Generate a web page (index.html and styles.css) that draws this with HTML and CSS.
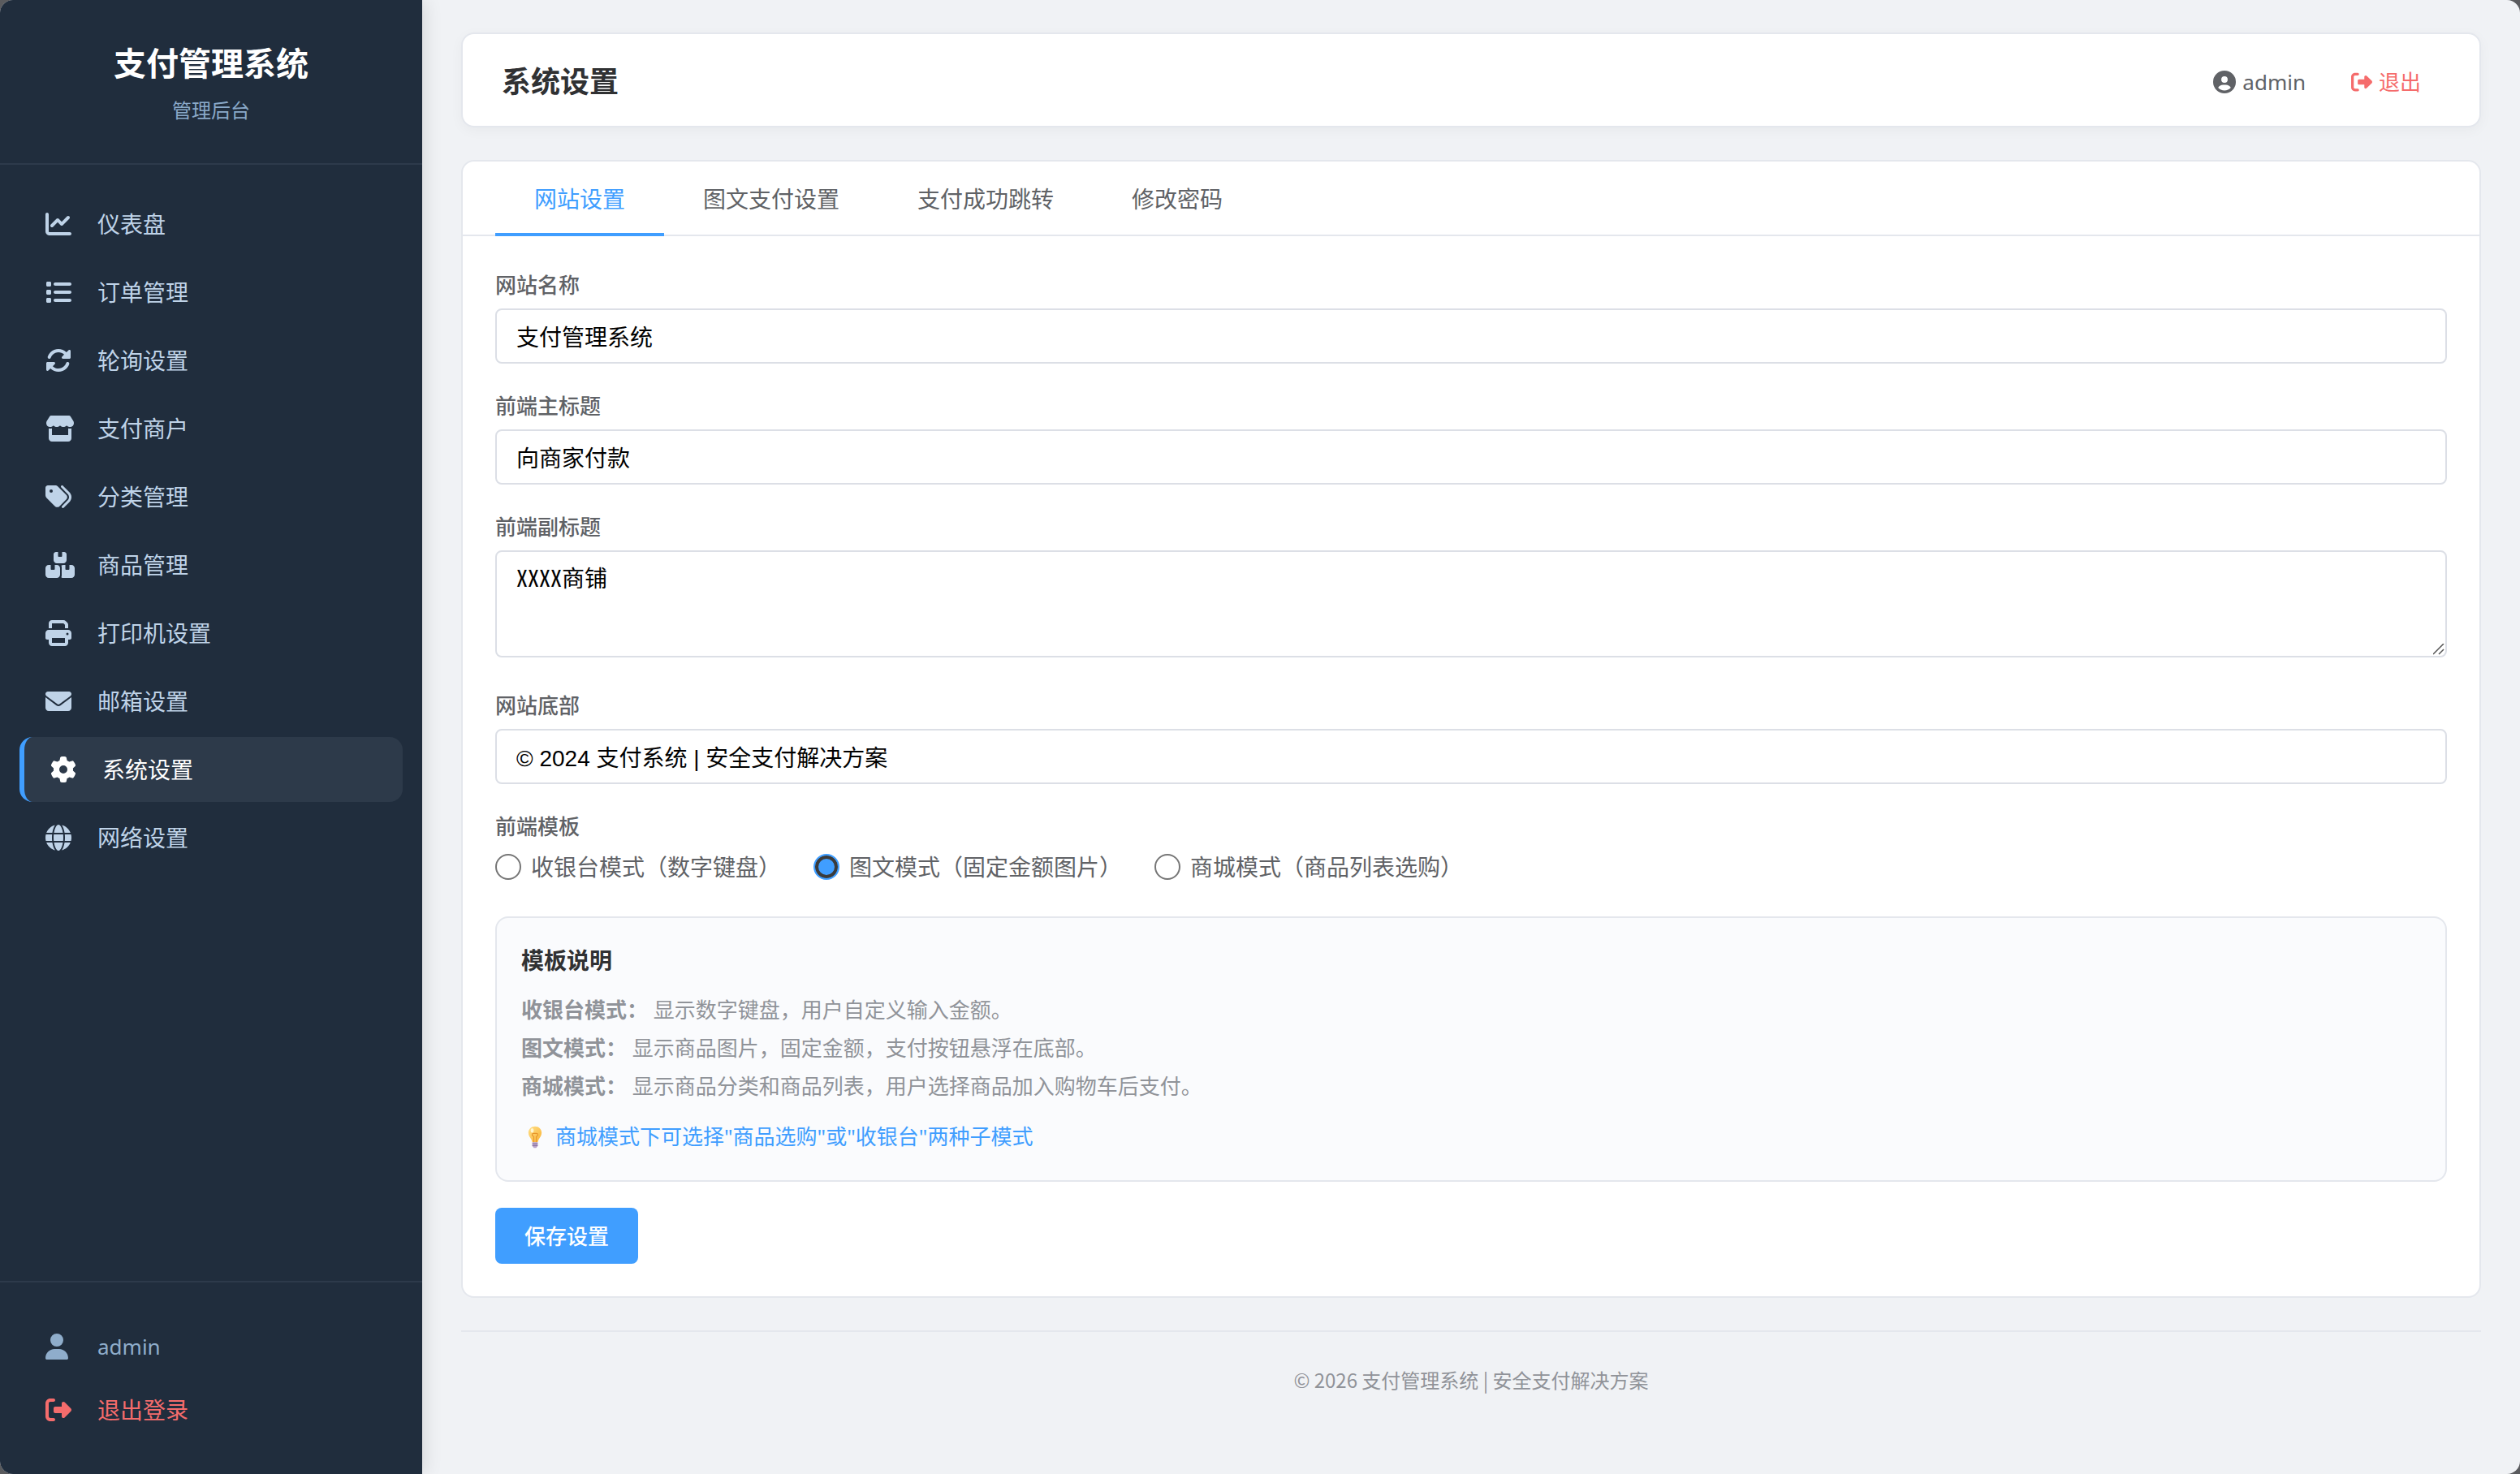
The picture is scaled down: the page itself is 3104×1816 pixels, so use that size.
FILE: index.html
```html
<!DOCTYPE html>
<html lang="zh-CN">

<head>
  <meta charset="UTF-8">
  <meta name="viewport" content="width=device-width, initial-scale=1.0">
  <title>系统设置 - 支付管理系统</title>
  <link rel="stylesheet" href="styles.css">
</head>

<body>
  <aside class="sidebar">
    <div class="sidebar-header">
      <h2>支付管理系统</h2>
      <p>管理后台</p>
    </div>

    <nav class="sidebar-nav">
      <a href="#dashboard" class="nav-item">
        <svg class="icon" viewBox="0 0 512 512"><path d="M64 64c0-17.7-14.3-32-32-32S0 46.3 0 64L0 400c0 44.2 35.8 80 80 80l400 0c17.7 0 32-14.3 32-32s-14.3-32-32-32L80 416c-8.8 0-16-7.2-16-16L64 64zm406.6 86.6c12.5-12.5 12.5-32.8 0-45.3s-32.8-12.5-45.3 0L320 210.7l-57.4-57.4c-12.5-12.5-32.8-12.5-45.3 0l-112 112c-12.5 12.5-12.5 32.8 0 45.3s32.8 12.5 45.3 0L240 221.3l57.4 57.4c12.5 12.5 32.8 12.5 45.3 0l128-128z"/></svg>
        <span>仪表盘</span>
      </a>
      <a href="#orders" class="nav-item">
        <svg class="icon" viewBox="0 0 512 512"><path d="M40 48C26.7 48 16 58.7 16 72l0 48c0 13.3 10.7 24 24 24l48 0c13.3 0 24-10.7 24-24l0-48c0-13.3-10.7-24-24-24L40 48zM192 64c-17.7 0-32 14.3-32 32s14.3 32 32 32l288 0c17.7 0 32-14.3 32-32s-14.3-32-32-32L192 64zm0 160c-17.7 0-32 14.3-32 32s14.3 32 32 32l288 0c17.7 0 32-14.3 32-32s-14.3-32-32-32l-288 0zm0 160c-17.7 0-32 14.3-32 32s14.3 32 32 32l288 0c17.7 0 32-14.3 32-32s-14.3-32-32-32l-288 0zM16 232l0 48c0 13.3 10.7 24 24 24l48 0c13.3 0 24-10.7 24-24l0-48c0-13.3-10.7-24-24-24l-48 0c-13.3 0-24 10.7-24 24zM40 368c-13.3 0-24 10.7-24 24l0 48c0 13.3 10.7 24 24 24l48 0c13.3 0 24-10.7 24-24l0-48c0-13.3-10.7-24-24-24l-48 0z"/></svg>
        <span>订单管理</span>
      </a>
      <a href="#polling" class="nav-item">
        <svg class="icon" viewBox="0 0 512 512"><path d="M142.9 142.9c-17.5 17.5-30.1 38-37.8 59.8c-5.9 16.7-24.2 25.4-40.8 19.5s-25.4-24.2-19.5-40.8C55.6 150.7 73.2 122 97.6 97.6c87.2-87.2 228.3-87.5 315.8-1L455 55c6.9-6.9 17.2-8.9 26.2-5.2s14.8 12.5 14.8 22.2l0 128c0 13.3-10.7 24-24 24l-8.4 0c0 0 0 0 0 0L344 224c-9.7 0-18.5-5.8-22.2-14.8s-1.7-19.3 5.2-26.2l41.1-41.1c-62.6-61.5-163.1-61.2-225.3 1zM16 312c0-13.3 10.7-24 24-24l7.6 0 .7 0L168 288c9.7 0 18.5 5.8 22.2 14.8s1.7 19.3-5.2 26.2l-41.1 41.1c62.6 61.5 163.1 61.2 225.3-1c17.5-17.5 30.1-38 37.8-59.8c5.9-16.7 24.2-25.4 40.8-19.5s25.4 24.2 19.5 40.8c-10.8 30.6-28.4 59.3-52.9 83.8c-87.2 87.2-228.3 87.5-315.8 1L57 457c-6.9 6.9-17.2 8.9-26.2 5.2S16 449.7 16 440l0-119.6 0-.7 0-7.6z"/></svg>
        <span>轮询设置</span>
      </a>
      <a href="#merchants" class="nav-item">
        <svg class="icon" viewBox="0 0 576 512"><path d="M547.6 103.8L490.3 13.1C485.2 5 476.1 0 466.4 0L109.6 0C99.9 0 90.8 5 85.7 13.1L28.3 103.8c-29.6 46.8-3.4 111.9 51.9 119.4c4 .5 8.1 .8 12.1 .8c26.1 0 49.3-11.4 65.2-29c15.9 17.6 39.1 29 65.2 29c26.1 0 49.3-11.4 65.2-29c15.9 17.6 39.1 29 65.2 29c26.2 0 49.3-11.4 65.2-29c16 17.6 39.1 29 65.2 29c4.1 0 8.1-.3 12.1-.8c55.5-7.4 81.8-72.5 52.1-119.4zM499.7 254.9c0 0 0 0-.1 0c-5.3 .7-10.7 1.1-16.2 1.1c-12.4 0-24.3-1.9-35.4-5.3L448 384l-320 0 0-133.4c-11.2 3.5-23.2 5.4-35.6 5.4c-5.5 0-11-.4-16.3-1.1l-.1 0c-4.1-.6-8.1-1.3-12-2.3L64 384l0 64c0 35.3 28.7 64 64 64l320 0c35.3 0 64-28.7 64-64l0-64 0-131.4c-4 1-8 1.8-12.3 2.3z"/></svg>
        <span>支付商户</span>
      </a>
      <a href="#categories" class="nav-item">
        <svg class="icon" viewBox="0 0 512 512"><path d="M345 39.1L472.8 168.4c52.4 53 52.4 138.2 0 191.2L360.8 472.9c-9.3 9.4-24.5 9.5-33.9 .2s-9.5-24.5-.2-33.9L438.6 325.9c33.9-34.3 33.9-89.4 0-123.7L310.9 72.9c-9.3-9.4-9.2-24.6 .2-33.9s24.6-9.2 33.9 .2zM0 229.5L0 80C0 53.5 21.5 32 48 32l149.5 0c17 0 33.3 6.7 45.3 18.7l168 168c25 25 25 65.5 0 90.5L277.3 442.7c-25 25-65.5 25-90.5 0l-168-168C6.7 262.7 0 246.5 0 229.5zM144 144a32 32 0 1 0 -64 0 32 32 0 1 0 64 0z"/></svg>
        <span>分类管理</span>
      </a>
      <a href="#products" class="nav-item">
        <svg class="icon" viewBox="0 0 576 512"><path d="M248 0L208 0c-26.5 0-48 21.5-48 48l0 112c0 35.3 28.7 64 64 64l128 0c35.3 0 64-28.7 64-64l0-112c0-26.5-21.5-48-48-48L328 0l0 80c0 8.8-7.2 16-16 16l-48 0c-8.8 0-16-7.2-16-16l0-80zM64 256c-35.3 0-64 28.7-64 64L0 448c0 35.3 28.7 64 64 64l160 0c35.3 0 64-28.7 64-64l0-128c0-35.3-28.7-64-64-64l-40 0 0 80c0 8.8-7.2 16-16 16l-48 0c-8.8 0-16-7.2-16-16l0-80-40 0zM352 512l160 0c35.3 0 64-28.7 64-64l0-128c0-35.3-28.7-64-64-64l-40 0 0 80c0 8.8-7.2 16-16 16l-48 0c-8.8 0-16-7.2-16-16l0-80-40 0c-15 0-28.8 5.1-39.7 13.8c4.9 10.4 7.7 22 7.7 34.2l0 160c0 12.2-2.8 23.8-7.7 34.2C323.2 506.9 337 512 352 512z"/></svg>
        <span>商品管理</span>
      </a>
      <a href="#printer" class="nav-item">
        <svg class="icon" viewBox="0 0 512 512"><path d="M128 0C92.7 0 64 28.7 64 64l0 96 64 0 0-96 226.7 0L384 93.3l0 66.7 64 0 0-66.7c0-17-6.7-33.3-18.7-45.3L400 18.7C388 6.7 371.7 0 354.7 0L128 0zM384 352l0 32 0 64-256 0 0-64 0-16 0-16 256 0zm64 32l32 0c17.7 0 32-14.3 32-32l0-96c0-35.3-28.7-64-64-64L64 192c-35.3 0-64 28.7-64 64l0 96c0 17.7 14.3 32 32 32l32 0 0 64c0 35.3 28.7 64 64 64l256 0c35.3 0 64-28.7 64-64l0-64zM432 248a24 24 0 1 1 0 48 24 24 0 1 1 0-48z"/></svg>
        <span>打印机设置</span>
      </a>
      <a href="#email" class="nav-item">
        <svg class="icon" viewBox="0 0 512 512"><path d="M48 64C21.5 64 0 85.5 0 112c0 15.1 7.1 29.3 19.2 38.4L236.8 313.6c11.4 8.5 27 8.5 38.4 0L492.8 150.4c12.1-9.1 19.2-23.3 19.2-38.4c0-26.5-21.5-48-48-48L48 64zM0 176L0 384c0 35.3 28.7 64 64 64l384 0c35.3 0 64-28.7 64-64l0-208L294.4 339.2c-22.8 17.1-54 17.1-76.8 0L0 176z"/></svg>
        <span>邮箱设置</span>
      </a>
      <a href="#settings" class="nav-item active">
        <svg class="icon" viewBox="0 0 512 512"><path d="M495.9 166.6c3.2 8.7 .5 18.4-6.4 24.6l-43.3 39.4c1.1 8.3 1.7 16.8 1.7 25.4s-.6 17.1-1.7 25.4l43.3 39.4c6.9 6.2 9.6 15.9 6.4 24.6c-4.4 11.9-9.7 23.3-15.8 34.3l-4.7 8.1c-6.6 11-14 21.4-22.1 31.2c-5.9 7.2-15.7 9.6-24.5 6.8l-55.7-17.7c-13.4 10.3-28.2 18.9-44 25.4l-12.5 57.1c-2 9.1-9 16.3-18.2 17.8c-13.8 2.3-28 3.5-42.5 3.5s-28.7-1.2-42.5-3.5c-9.2-1.5-16.2-8.7-18.2-17.8l-12.5-57.1c-15.8-6.5-30.6-15.1-44-25.4L83.1 425.9c-8.8 2.8-18.6 .3-24.5-6.8c-8.1-9.8-15.5-20.2-22.1-31.2l-4.7-8.1c-6.1-11-11.4-22.4-15.8-34.3c-3.2-8.7-.5-18.4 6.4-24.6l43.3-39.4C64.6 273.1 64 264.6 64 256s.6-17.1 1.7-25.4L22.4 191.2c-6.9-6.2-9.6-15.9-6.4-24.6c4.4-11.9 9.7-23.3 15.8-34.3l4.7-8.1c6.6-11 14-21.4 22.1-31.2c5.9-7.2 15.7-9.6 24.5-6.8l55.7 17.7c13.4-10.3 28.2-18.9 44-25.4l12.5-57.1c2-9.1 9-16.3 18.2-17.8C227.3 1.2 241.5 0 256 0s28.7 1.2 42.5 3.5c9.2 1.5 16.2 8.7 18.2 17.8l12.5 57.1c15.8 6.5 30.6 15.1 44 25.4l55.7-17.7c8.8-2.8 18.6-.3 24.5 6.8c8.1 9.8 15.5 20.2 22.1 31.2l4.7 8.1c6.1 11 11.4 22.4 15.8 34.3zM256 336a80 80 0 1 0 0-160 80 80 0 1 0 0 160z"/></svg>
        <span>系统设置</span>
      </a>
      <a href="#network" class="nav-item">
        <svg class="icon" viewBox="0 0 512 512"><path d="M352 256c0 22.2-1.2 43.6-3.3 64l-185.3 0c-2.2-20.4-3.3-41.8-3.3-64s1.2-43.6 3.3-64l185.3 0c2.2 20.4 3.3 41.8 3.3 64zm28.8-64l123.1 0c5.3 20.5 8.1 41.9 8.1 64s-2.8 43.5-8.1 64l-123.1 0c2.1-20.6 3.2-42 3.2-64s-1.1-43.4-3.2-64zm112.6-32l-116.7 0c-10-63.9-29.8-117.4-55.3-151.6c78.3 20.7 142 77.5 171.9 151.6zm-149.1 0l-176.6 0c6.1-36.4 15.5-68.6 27-94.7c10.5-23.6 22.2-40.7 33.5-51.5C239.4 3.2 248.7 0 256 0s16.6 3.2 27.8 13.8c11.3 10.8 23 27.9 33.5 51.5c11.6 26 20.9 58.2 27 94.7zm-209 0L18.6 160C48.6 85.9 112.2 29.1 190.6 8.4C165.1 42.6 145.3 96.1 135.3 160zM8.1 192l123.1 0c-2.1 20.6-3.2 42-3.2 64s1.1 43.4 3.2 64L8.1 320C2.8 299.5 0 278.1 0 256s2.8-43.5 8.1-64zM194.7 446.6c-11.6-26-20.9-58.2-27-94.6l176.6 0c-6.1 36.4-15.5 68.6-27 94.6c-10.5 23.6-22.2 40.7-33.5 51.5C272.6 508.8 263.3 512 256 512s-16.6-3.2-27.8-13.8c-11.3-10.8-23-27.9-33.5-51.5zM135.3 352c10 63.9 29.8 117.4 55.3 151.6C112.2 482.9 48.6 426.1 18.6 352l116.7 0zm358.1 0c-30 74.1-93.6 130.9-171.9 151.6c25.5-34.2 45.2-87.7 55.3-151.6l116.7 0z"/></svg>
        <span>网络设置</span>
      </a>
    </nav>

    <div class="sidebar-footer">
      <div class="footer-item">
        <svg class="icon" viewBox="0 0 448 512"><path d="M224 256A128 128 0 1 0 224 0a128 128 0 1 0 0 256zm-45.7 48C79.8 304 0 383.8 0 482.3C0 498.7 13.3 512 29.7 512l388.6 0c16.4 0 29.7-13.3 29.7-29.7C448 383.8 368.2 304 269.7 304l-91.4 0z"/></svg>
        <span class="username">admin</span>
      </div>
      <a href="#logout" class="footer-item logout">
        <svg class="icon" viewBox="0 0 512 512"><path d="M377.9 105.9L500.7 228.7c7.2 7.2 11.3 17.1 11.3 27.3s-4.1 20.1-11.3 27.3L377.9 406.1c-6.4 6.4-15 9.9-24 9.9c-18.7 0-33.9-15.2-33.9-33.9l0-62.1-128 0c-17.7 0-32-14.3-32-32l0-64c0-17.7 14.3-32 32-32l128 0 0-62.1c0-18.7 15.2-33.9 33.9-33.9c9 0 17.6 3.6 24 9.9zM160 96L96 96c-17.7 0-32 14.3-32 32l0 256c0 17.7 14.3 32 32 32l64 0c17.7 0 32 14.3 32 32s-14.3 32-32 32l-64 0c-53 0-96-43-96-96L0 128C0 75 43 32 96 32l64 0c17.7 0 32 14.3 32 32s-14.3 32-32 32z"/></svg>
        <span>退出登录</span>
      </a>
    </div>
  </aside>

  <main class="main">
    <header class="page-header">
      <h1>系统设置</h1>
      <div class="header-user">
        <span class="user-info">
          <svg class="icon" viewBox="0 0 512 512"><path d="M399 384.2C376.9 345.8 335.4 320 288 320l-64 0c-47.4 0-88.9 25.8-111 64.2c35.2 39.2 86.2 63.8 143 63.8s107.8-24.7 143-63.8zM0 256a256 256 0 1 1 512 0A256 256 0 1 1 0 256zm256 16a72 72 0 1 0 0-144 72 72 0 1 0 0 144z"/></svg>
          <span class="username">admin</span>
        </span>
        <a href="#logout" class="header-logout">
          <svg class="icon" viewBox="0 0 512 512"><path d="M377.9 105.9L500.7 228.7c7.2 7.2 11.3 17.1 11.3 27.3s-4.1 20.1-11.3 27.3L377.9 406.1c-6.4 6.4-15 9.9-24 9.9c-18.7 0-33.9-15.2-33.9-33.9l0-62.1-128 0c-17.7 0-32-14.3-32-32l0-64c0-17.7 14.3-32 32-32l128 0 0-62.1c0-18.7 15.2-33.9 33.9-33.9c9 0 17.6 3.6 24 9.9zM160 96L96 96c-17.7 0-32 14.3-32 32l0 256c0 17.7 14.3 32 32 32l64 0c17.7 0 32 14.3 32 32s-14.3 32-32 32l-64 0c-53 0-96-43-96-96L0 128C0 75 43 32 96 32l64 0c17.7 0 32 14.3 32 32s-14.3 32-32 32z"/></svg>
          <span>退出</span>
        </a>
      </div>
    </header>

    <section class="card">
      <div class="tabs">
        <button type="button" class="tab active">网站设置</button>
        <button type="button" class="tab">图文支付设置</button>
        <button type="button" class="tab">支付成功跳转</button>
        <button type="button" class="tab">修改密码</button>
      </div>

      <form class="settings-form">
        <div class="form-group">
          <label for="site_name">网站名称</label>
          <input type="text" id="site_name" class="form-control" value="支付管理系统">
        </div>
        <div class="form-group">
          <label for="main_title">前端主标题</label>
          <input type="text" id="main_title" class="form-control" value="向商家付款">
        </div>
        <div class="form-group form-group-textarea">
          <label for="sub_title">前端副标题</label>
          <textarea id="sub_title" class="form-control">XXXX商铺</textarea>
        </div>
        <div class="form-group">
          <label for="site_footer">网站底部</label>
          <input type="text" id="site_footer" class="form-control" value="© 2024 支付系统 | 安全支付解决方案">
        </div>
        <fieldset class="form-group">
          <legend>前端模板</legend>
          <div class="radio-group">
            <label class="radio"><input type="radio" name="template" value="cashier">收银台模式（数字键盘）</label>
            <label class="radio"><input type="radio" name="template" value="image" checked>图文模式（固定金额图片）</label>
            <label class="radio"><input type="radio" name="template" value="mall">商城模式（商品列表选购）</label>
          </div>
        </fieldset>

        <div class="info-box">
          <h3>模板说明</h3>
          <p><strong>收银台模式：</strong> 显示数字键盘，用户自定义输入金额。</p>
          <p><strong>图文模式：</strong> 显示商品图片，固定金额，支付按钮悬浮在底部。</p>
          <p><strong>商城模式：</strong> 显示商品分类和商品列表，用户选择商品加入购物车后支付。</p>
          <p class="tip">
            <svg class="bulb" viewBox="0 0 36 36">
              <defs>
                <linearGradient id="glass" x1="0" y1="0" x2="1" y2="1">
                  <stop offset="0" stop-color="#ffe08a"/>
                  <stop offset="1" stop-color="#f9b233"/>
                </linearGradient>
              </defs>
              <path fill="url(#glass)" d="M18 1C12 1 7.500 5.500 7.500 11c0 5 3 7.500 4.600 10.500.8 1.500 1.200 3 1.600 4.500h8.600c.4-1.500.8-3 1.600-4.500 1.600-3 4.600-5.500 4.600-10.500C28.500 5.500 24 1 18 1z"/>
              <path fill="none" stroke="#e8962c" stroke-width="1.500" d="M16 26v-9c-3.500-1-3.500-5 0-5h4c3.500 0 3.500 4 0 5v9"/>
              <ellipse cx="13.500" cy="7.500" rx="2.500" ry="3.500" fill="#fff6d0"/>
              <path fill="#b8a3c9" d="M13.700 26h8.600v6l-2.500 3h-3.600l-2.500-3z"/>
              <path stroke="#7d6495" d="M13.700 28.500h8.600M13.700 31.500h8.600"/>
            </svg>
            <span>商城模式下可选择"商品选购"或"收银台"两种子模式</span>
          </p>
        </div>

        <button type="submit" class="btn-save">保存设置</button>
      </form>
    </section>

    <footer class="page-footer">© 2026 支付管理系统 | 安全支付解决方案</footer>
  </main>
</body>

</html>
```

FILE: styles.css
```css
* {
  margin: 0;
  padding: 0;
  box-sizing: border-box;
}

html {
  background: #5a5b5e;
}

body {
  min-height: 100vh;
  display: flex;
  background: #f0f2f5;
  color: #606266;
  font-family: "Noto Sans", "Noto Sans CJK SC", sans-serif;
  font-size: 28px;
  line-height: 44px;
  border-radius: 16px;
  overflow: hidden;
}

a {
  color: inherit;
  text-decoration: none;
}

.icon {
  height: 32px;
  fill: currentColor;
}

.username {
  font-size: 26px;
}

/* sidebar */
.sidebar {
  width: 520px;
  flex-shrink: 0;
  display: flex;
  flex-direction: column;
  background: #202d3d;
  color: #bfd3e8;
  box-shadow: 4px 0 20px rgba(0, 0, 0, .1);
}

.sidebar-header {
  padding: 46px 32px;
  text-align: center;
  border-bottom: 2px solid #2d3a4b;
}

.sidebar-header h2 {
  color: #fff;
  font-size: 40px;
  line-height: 64px;
}

.sidebar-header p {
  margin-top: 6px;
  color: #8aa9c9;
  font-size: 24px;
  line-height: 39px;
}

.sidebar-nav {
  flex: 1;
  display: flex;
  flex-direction: column;
  gap: 4px;
  padding: 33px 24px;
}

.nav-item {
  display: flex;
  align-items: center;
  padding: 18px 32px;
  border-radius: 16px;
}

.nav-item span,
.footer-item span {
  margin-left: auto;
  width: calc(100% - 64px);
}

.nav-item.active {
  background: #2d3a4a;
  border-left: 6px solid #409eff;
  color: #fff;
}

.sidebar-footer {
  padding: 40px 24px;
  border-top: 2px solid #2d3a4b;
}

.footer-item {
  display: flex;
  align-items: center;
  padding: 17px 32px;
  color: #8fadcb;
}

.footer-item.logout {
  color: #f56c6c;
}

/* main area */
.main {
  flex: 1;
  padding: 40px 48px;
}

.page-header {
  display: flex;
  justify-content: space-between;
  align-items: center;
  padding: 30px 48px 26px;
  background: #fff;
  border: 2px solid #e4e7ed;
  border-radius: 16px;
  box-shadow: 0 4px 16px rgba(0, 0, 0, .04);
}

.page-header h1 {
  color: #303133;
  font-size: 36px;
  line-height: 57px;
}

.header-user {
  display: flex;
  align-items: center;
  gap: 32px;
}

.user-info,
.header-logout {
  display: flex;
  align-items: center;
  gap: 8px;
}

.user-info .icon {
  height: 28px;
}

.header-logout {
  padding: 0 24px;
  color: #f56c6c;
  font-size: 26px;
}

.header-logout .icon {
  height: 26px;
}

.card {
  margin-top: 40px;
  background: #fff;
  border: 2px solid #e4e7ed;
  border-radius: 16px;
}

.tabs {
  display: flex;
  padding: 0 40px;
  border-bottom: 2px solid #e4e7ed;
}

.tab {
  margin-bottom: -2px;
  padding: 24px 48px 20px;
  background: none;
  border: 0;
  border-bottom: 4px solid transparent;
  color: #606266;
  font: inherit;
  cursor: pointer;
}

.tab.active {
  color: #409eff;
  border-bottom-color: #409eff;
}

.settings-form {
  padding: 40px;
}

.form-group {
  margin-bottom: 32px;
  border: 0;
}

.form-group-textarea {
  margin-bottom: 39px;
}

.form-group > label,
.form-group legend {
  display: block;
  margin-bottom: 8px;
  font-size: 26px;
  font-weight: 500;
  line-height: 41px;
}

.form-control {
  display: block;
  width: 100%;
  height: 68px;
  padding: 0 24px;
  background: #fff;
  border: 2px solid #dcdfe6;
  border-radius: 8px;
  color: #000;
  font-family: "Liberation Sans", "Noto Sans CJK SC", sans-serif;
  font-size: 28px;
}

textarea.form-control {
  height: 132px;
  padding: 14px 24px;
  font-family: "Noto Sans Mono CJK SC", "Noto Sans CJK SC", monospace;
  font-weight: 300;
  line-height: 34px;
  resize: vertical;
}

textarea::-webkit-resizer {
  background: url("data:image/svg+xml,%3Csvg xmlns='http://www.w3.org/2000/svg' width='15' height='15'%3E%3Cpath d='M0 13L13 0M7 13L13 7' stroke='%23555' stroke-width='1.5'/%3E%3C/svg%3E") no-repeat;
}

.radio-group {
  display: flex;
  gap: 40px;
}

.radio {
  display: flex;
  align-items: center;
  gap: 12px;
  line-height: 42px;
}

.radio input {
  appearance: none;
  width: 32px;
  height: 32px;
  background: #fff;
  border: 2px solid #767676;
  border-radius: 50%;
}

.radio input:checked {
  background: #409eff;
  border-color: #409eff;
  box-shadow: inset 0 0 0 4px #3b3b3b;
}

.info-box {
  margin: 40px 0 32px;
  padding: 30px;
  background: #fafbfd;
  border: 2px solid #e4e7ed;
  border-radius: 16px;
  color: #909399;
  font-size: 26px;
  line-height: 47px;
}

.info-box h3 {
  margin-bottom: 15px;
  color: #303133;
  font-size: 28px;
  line-height: 45px;
}

.info-box .tip {
  display: flex;
  align-items: center;
  gap: 8px;
  margin-top: 15px;
  color: #409eff;
}

.bulb {
  width: 34px;
  height: 28px;
}

.btn-save {
  padding: 15px 36px 13px;
  background: #409eff;
  border: 0;
  border-radius: 8px;
  color: #fff;
  font: inherit;
  font-size: 26px;
  font-weight: 500;
  line-height: 41px;
  cursor: pointer;
}

.page-footer {
  margin-top: 40px;
  padding: 40px 0;
  border-top: 2px solid #e4e7ed;
  color: #909399;
  font-family: "Noto Sans CJK SC", sans-serif;
  font-size: 24px;
  line-height: 38px;
  text-align: center;
}
```
